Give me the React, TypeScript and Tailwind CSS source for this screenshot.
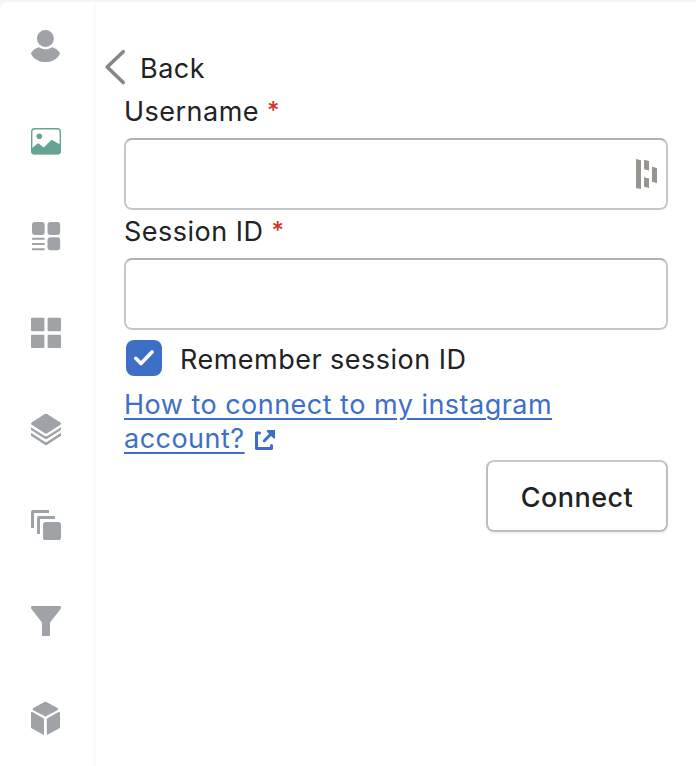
import type { ReactNode } from "react";

function NavIcon({ label, active, children }: { label: string; active?: boolean; children: ReactNode }) {
  return (
    <button aria-label={label} className={active ? "text-[#68a295]" : "text-[#9fa3a8]"}>
      <svg viewBox="0 0 36 36" className="block size-9" fill="currentColor" strokeLinejoin="round">
        {children}
      </svg>
    </button>
  );
}

function Sidebar() {
  return (
    <nav className="flex w-24 shrink-0 flex-col gap-[60px] border-r-2 border-[#fafafa] pt-[26px] pl-7">
      <NavIcon label="Profile">
        <circle cx="17.4" cy="10.4" r="8.5" />
        <path d="M3.4 24.3Q6.2 20.3 10 19.4Q11.2 19.1 12.4 19.9Q17.5 22.8 22.6 19.9Q23.8 19.1 25 19.4Q28.8 20.3 31.6 24.3Q32.2 25.3 31.6 26.4C29 31 24 34.1 17.5 34.1S6 31 3.4 26.4Q2.8 25.3 3.4 24.3Z" />
      </NavIcon>
      <NavIcon label="Images" active>
        <rect x="3.7" y="4.7" width="28.6" height="25.2" rx="3" fill="none" stroke="currentColor" strokeWidth="1.4" />
        <circle cx="11.3" cy="12.3" r="2.8" />
        <path d="M3.4 24.6L9.6 19.6Q10.3 19.1 11 19.7L15.8 23.6L23 16.3Q23.7 15.7 24.5 16.2L32.6 20.7V27Q32.6 30.2 29.5 30.2H6.5Q3.4 30.2 3.4 27Z" />
      </NavIcon>
      <NavIcon label="Content">
        <rect x="4" y="2" width="12.7" height="13" rx="3" />
        <rect x="19.5" y="2" width="12.7" height="13" rx="3" />
        <rect x="19.5" y="17.3" width="12.7" height="13" rx="3" />
        <rect x="4" y="17.8" width="12.7" height="2" rx="0.6" />
        <rect x="4" y="23" width="12.7" height="2" rx="0.6" />
        <rect x="4" y="28.2" width="12.7" height="2" rx="0.6" />
      </NavIcon>
      <NavIcon label="Grid">
        <rect x="3" y="1.8" width="13.4" height="13.4" rx="1" />
        <rect x="19.6" y="1.8" width="13.4" height="13.4" rx="1" />
        <rect x="3" y="18.7" width="13.4" height="13.4" rx="1" />
        <rect x="19.6" y="18.7" width="13.4" height="13.4" rx="1" />
      </NavIcon>
      <NavIcon label="Layers">
        <path d="M16.8 2.1Q18 1.4 19.2 2.1L32 10.3Q34 11.7 32 13.1L19.2 21.2Q18 22 16.8 21.2L4 13.1Q2 11.7 4 10.3Z" />
        <path d="M3 15.2L16.8 24Q18 24.7 19.2 24L33 15.2V18L19.2 26.8Q18 27.5 16.8 26.8L3 18Z" />
        <path d="M3 20.8L16.8 29.7Q18 30.4 19.2 29.7L33 20.8V23.8L19.2 32.8Q18 33.6 16.8 32.8L3 23.8Z" />
      </NavIcon>
      <NavIcon label="Copies">
        <path d="M5 2H21V5H6V20H3V4Q3 2 5 2Z" />
        <path d="M11 8H27V11H12V26H9V10Q9 8 11 8Z" />
        <rect x="15" y="14" width="18" height="18" rx="2.6" />
      </NavIcon>
      <NavIcon label="Filter">
        <path d="M4 2H32Q33 2 33 3V3.8Q33 4.6 32.4 5.3L22 18.4V31Q22 32 21 32H15Q14 32 14 31V18.4L3.6 5.3Q3 4.6 3 3.8V3Q3 2 4 2Z" />
      </NavIcon>
      <NavIcon label="Objects">
        <path d="M16.4 2.1Q17.4 1.5 18.4 2.1L29.4 8.1Q31.2 9.2 29.4 10.3L18.4 16.1Q17.4 16.7 16.4 16.1L5.4 10.3Q3.6 9.2 5.4 8.1Z" />
        <path d="M3 13Q3 11.4 4.4 12.1L15 17.9Q16 18.5 16 19.5V33.8Q16 35.1 14.8 34.4L4 28.5Q3 28 3 27Z" />
        <path d="M32 13Q32 11.4 30.6 12.1L19.8 17.9Q18.8 18.5 18.8 19.5V33.8Q18.8 35.1 20 34.4L31 28.5Q32 28 32 27Z" />
      </NavIcon>
    </nav>
  );
}

function Field({ label, children }: { label: string; children?: ReactNode }) {
  return (
    <label className="block h-[120px]">
      <span className="flex h-9 items-center gap-2">
        {label}
        <span className="pb-[2px] text-[24px] font-medium text-[#c9371f]">*</span>
      </span>
      <span className="relative mt-2 block h-[72px]">
        <input className="block size-full rounded-lg border-2 border-[#c5c8cc] border-t-[#aeb2b7] bg-white px-3 outline-none" />
        {children}
      </span>
    </label>
  );
}

export default function App() {
  return (
    <div className="h-[766px] w-[696px] overflow-hidden bg-[#f5f5f5] pt-[2px]">
      <div className="flex h-full rounded-tl-lg bg-white font-['Inter',sans-serif] text-[27px] leading-[34px] tracking-[0.48px] text-[#202223]">
        <Sidebar />
        <main className="flex-1 pt-[44px] pr-7 pl-7">
          <button className="-ml-5 flex h-[48px] items-start gap-[14px]">
            <svg viewBox="0 0 22 38" className="mt-[2px] h-[38px] w-[22px]" fill="none" stroke="#858585" strokeWidth="3.6" strokeLinecap="round" strokeLinejoin="round">
              <path d="M19.2 3.7L3.2 19L19.2 34.5" />
            </svg>
            <span className="pt-[6px]">Back</span>
          </button>
          <Field label="Username">
            <svg viewBox="0 0 22 30" className="absolute top-[21px] right-[10px] h-[30px] w-[22px]" fill="#98948f">
              <path d="M0 0L5 1.2V30L0 29Z" />
              <path d="M8 .8L13 2V11.6L8 10.3Z" />
              <path d="M8 18.2L13 19.4V29L8 27.8Z" />
              <path d="M16 7.8L21 9V24L16 22.8Z" />
            </svg>
          </Field>
          <Field label="Session ID" />
          <div className="mb-[6px] flex h-[48px] items-center gap-[18px] pl-[2px]">
            <span role="checkbox" aria-checked="true" className="flex size-9 items-center justify-center rounded-lg bg-[#3e6fc6]">
              <svg viewBox="0 0 20 16" className="h-4 w-5" fill="none" stroke="white" strokeWidth="3.6" strokeLinecap="round" strokeLinejoin="round">
                <path d="M1.8 8.3L7 13.5L18 2" />
              </svg>
            </span>
            <span className="pt-1">Remember session ID</span>
          </div>
          <a href="#help" className="block h-[72px] text-[#3e6fc6] underline decoration-2 underline-offset-[4px]">
            How to connect to my instagram
            <br />
            account?
            <svg viewBox="0 0 20 20" className="ml-[10px] inline size-5 align-[-2px]" fill="none" stroke="currentColor" strokeWidth="3" strokeLinecap="round" strokeLinejoin="round">
              <path d="M4.5 3H1.5V18.5H16.5V15.5" />
              <path d="M18 2L9.3 10.7" />
              <path d="M12 0H20V8.4L18.6 8.4L11.8 1.6Z" fill="currentColor" stroke="none" />
            </svg>
          </a>
          <div className="flex justify-end">
            <button className="h-[72px] w-[182px] rounded-lg border-2 border-[#babfc3] border-t-[#c5c8cc] bg-white pt-1 font-medium shadow-[0_2px_1px_rgba(0,0,0,0.05)]">
              Connect
            </button>
          </div>
        </main>
      </div>
    </div>
  );
}
